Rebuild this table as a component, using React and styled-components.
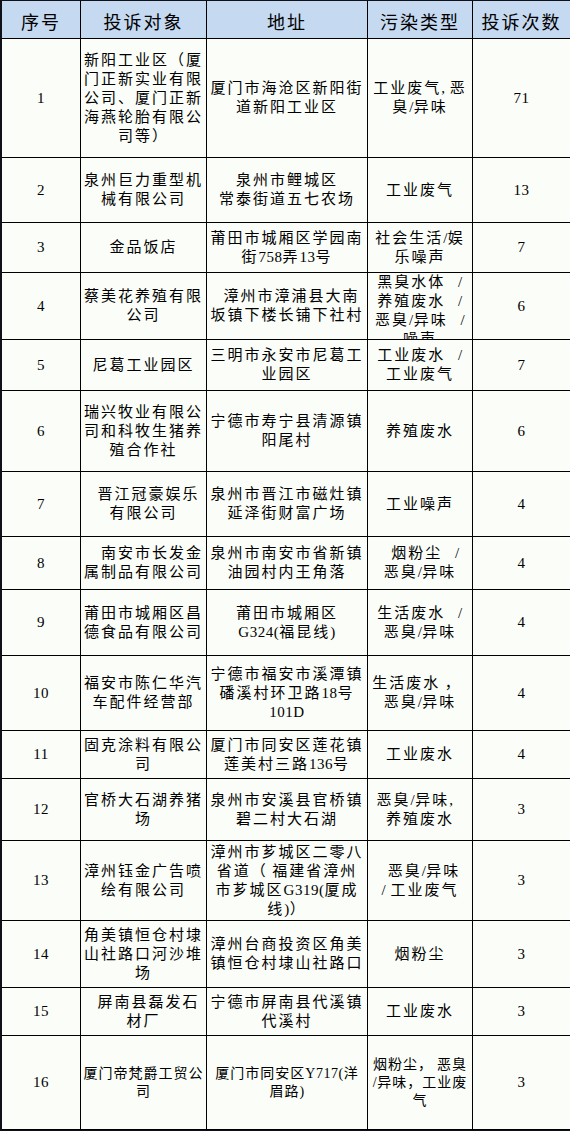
import React from 'react';
import styled, { createGlobalStyle } from 'styled-components';

const GlobalStyle = createGlobalStyle`
  html, body {
    margin: 0;
    padding: 0;
    background: #fff;
    overflow: hidden;
  }
  body {
    font-family: "Noto Sans CJK SC", sans-serif;
    color: #000;
  }
`;

const COLUMNS = '79px 126px 161px 105px 1fr';

const Table = styled.div`
  width: 570px;
  box-sizing: border-box;
  border-left: 2px solid #101018;
  border-top: 1px solid #101018;
  border-bottom: 1px solid #101018;
  font-family: "Liberation Serif", "Noto Sans CJK SC", sans-serif;
`;

const Row = styled.div`
  display: grid;
  grid-template-columns: ${COLUMNS};
  height: ${({ $h }) => $h}px;
`;

const Cell = styled.div`
  box-sizing: border-box;
  display: flex;
  flex-direction: column;
  align-items: center;
  justify-content: ${({ $top }) => ($top ? 'flex-start' : 'center')};
  overflow: hidden;
  padding: 0 2px;
  border-right: 1px solid #000;
  border-bottom: 1px solid #000;
  background: #fafdf8;
  text-align: center;
  font-size: ${({ $small }) => ($small ? 14 : 15)}px;
  line-height: ${({ $small }) => ($small ? 18 : 19)}px;
  letter-spacing: ${({ $small }) => ($small ? 1 : 2)}px;

  &:last-child {
    border-right: none;
  }
`;

const HeadCell = styled(Cell)`
  background: #c5d9f1;
  font-family: "Noto Sans CJK SC", sans-serif;
  font-size: 18px;
  line-height: 22px;
  letter-spacing: 2px;
  padding-top: 3px;
`;

const Line = styled.div`
  white-space: pre;
  padding-left: ${({ $indent }) => Math.max($indent, 0)}px;
  padding-right: ${({ $indent }) => Math.max(-$indent, 0)}px;
`;

// half-width runs (digits, slashes, brackets) sit tighter than the CJK glyphs
const Latin = styled.span`
  letter-spacing: 0.5px;
`;

const withLatin = (s) =>
  s
    .split(/([\x00-\xff]+)/)
    .filter(Boolean)
    .map((part, i) =>
      /[\x00-\xff]/.test(part) ? <Latin key={i}>{part}</Latin> : part
    );

const Lines = ({ lines }) =>
  lines.map((l, i) => {
    const { t, i: indent = 0 } = typeof l === 'string' ? { t: l } : l;
    return (
      <Line key={i} $indent={indent}>
        {withLatin(t)}
      </Line>
    );
  });

const headers = ['序号', '投诉对象', '地址', '污染类型', '投诉次数'];

const rows = [
  {
    h: 119,
    no: '1',
    target: ['新阳工业区（厦', '门正新实业有限', '公司、厦门正新', '海燕轮胎有限公', '司等）'],
    addr: ['厦门市海沧区新阳街', '道新阳工业区'],
    type: ['工业废气, 恶', '臭/异味'],
    count: '71',
  },
  {
    h: 65,
    no: '2',
    target: ['泉州巨力重型机', '械有限公司'],
    addr: ['泉州市鲤城区', '常泰街道五七农场'],
    type: ['工业废气'],
    count: '13',
  },
  {
    h: 50,
    no: '3',
    target: ['金品饭店'],
    addr: ['莆田市城厢区学园南', '街758弄13号'],
    type: ['社会生活/娱', '乐噪声'],
    count: '7',
  },
  {
    h: 67,
    no: '4',
    target: ['蔡美花养殖有限', '公司'],
    addr: [{ t: '漳州市漳浦县大南', i: 9 }, '坂镇下楼长铺下社村'],
    type: ['黑臭水体   /', '养殖废水   /', '恶臭/异味   /', '噪声'],
    typeTop: true,
    count: '6',
  },
  {
    h: 51,
    no: '5',
    target: ['尼葛工业园区'],
    addr: ['三明市永安市尼葛工', '业园区'],
    type: ['工业废水   /', '工业废气'],
    count: '7',
  },
  {
    h: 81,
    no: '6',
    target: ['瑞兴牧业有限公', '司和科牧生猪养', '殖合作社'],
    addr: ['宁德市寿宁县清源镇', '阳尾村'],
    type: ['养殖废水'],
    count: '6',
  },
  {
    h: 65,
    no: '7',
    target: [{ t: '晋江冠豪娱乐', i: 10 }, '有限公司'],
    addr: ['泉州市晋江市磁灶镇', '延泽街财富广场'],
    type: ['工业噪声'],
    count: '4',
  },
  {
    h: 53,
    no: '8',
    target: [{ t: '南安市长发金', i: 17 }, '属制品有限公司'],
    addr: ['泉州市南安市省新镇', '油园村内王角落'],
    type: [{ t: '烟粉尘   /', i: 11 }, '恶臭/异味'],
    count: '4',
  },
  {
    h: 66,
    no: '9',
    target: ['莆田市城厢区昌', '德食品有限公司'],
    addr: ['莆田市城厢区', 'G324(福昆线)'],
    type: ['生活废水   /', '恶臭/异味'],
    count: '4',
  },
  {
    h: 75,
    no: '10',
    target: ['福安市陈仁华汽', '车配件经营部'],
    addr: ['宁德市福安市溪潭镇', '磻溪村环卫路18号', '101D'],
    type: [{ t: '生活废水 ，', i: -6 }, '恶臭/异味'],
    count: '4',
  },
  {
    h: 48,
    no: '11',
    target: ['固克涂料有限公', '司'],
    addr: ['厦门市同安区莲花镇', '莲美村三路136号'],
    type: ['工业废水'],
    count: '4',
  },
  {
    h: 62,
    no: '12',
    target: ['官桥大石湖养猪', '场'],
    addr: ['泉州市安溪县官桥镇', '碧二村大石湖'],
    type: [{ t: '恶臭/异味,', i: -10 }, '养殖废水'],
    count: '3',
  },
  {
    h: 80,
    no: '13',
    target: ['漳州钰金广告喷', '绘有限公司'],
    addr: ['漳州市芗城区二零八', '省道（ 福建省漳州', '市芗城区G319(厦成', '线)）'],
    type: [{ t: '恶臭/异味', i: 8 }, '/ 工业废气'],
    count: '3',
  },
  {
    h: 67,
    no: '14',
    target: ['角美镇恒仓村埭', '山社路口河沙堆', '场'],
    addr: ['漳州台商投资区角美', '镇恒仓村埭山社路口'],
    type: ['烟粉尘'],
    count: '3',
  },
  {
    h: 48,
    no: '15',
    target: [{ t: '屏南县磊发石', i: 10 }, '材厂'],
    addr: ['宁德市屏南县代溪镇', '代溪村'],
    type: ['工业废水'],
    count: '3',
  },
  {
    h: 94,
    no: '16',
    small: true,
    target: ['厦门帝梵爵工贸公', '司'],
    addr: ['厦门市同安区Y717(洋', '眉路)'],
    type: ['烟粉尘， 恶臭', '/异味，工业废', '气'],
    count: '3',
  },
];

export default function App() {
  return (
    <>
      <GlobalStyle />
      <Table>
        <Row $h={38}>
          {headers.map((h) => (
            <HeadCell key={h}>{h}</HeadCell>
          ))}
        </Row>
        {rows.map((r) => (
          <Row key={r.no} $h={r.h}>
            <Cell>{withLatin(r.no)}</Cell>
            <Cell $small={r.small}>
              <Lines lines={r.target} />
            </Cell>
            <Cell $small={r.small}>
              <Lines lines={r.addr} />
            </Cell>
            <Cell $small={r.small} $top={r.typeTop}>
              <Lines lines={r.type} />
            </Cell>
            <Cell>{withLatin(r.count)}</Cell>
          </Row>
        ))}
      </Table>
    </>
  );
}
